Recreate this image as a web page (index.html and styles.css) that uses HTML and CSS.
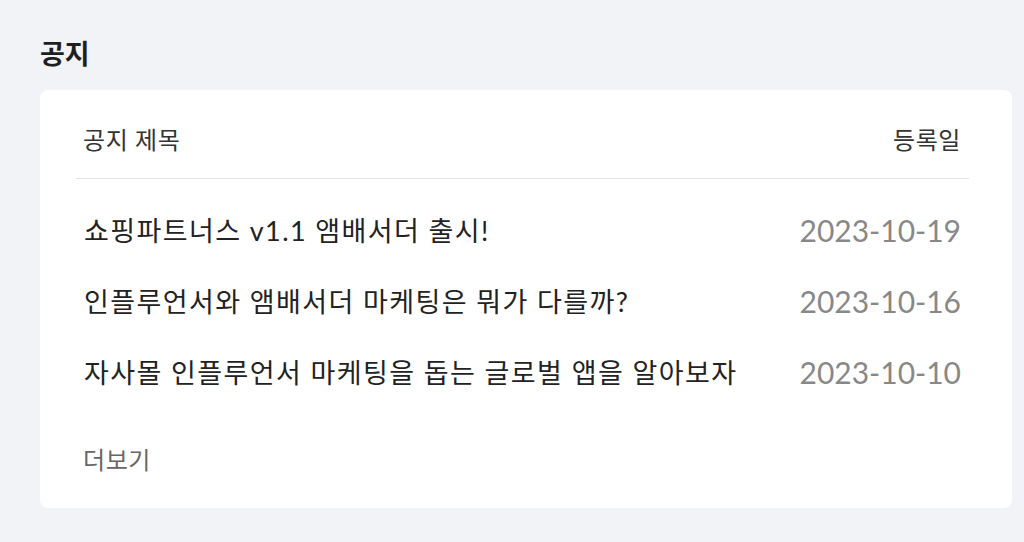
FILE: index.html
```html
<!DOCTYPE html>
<html lang="ko">

<head>
    <meta charset="UTF-8">
    <meta name="viewport" content="width=device-width, initial-scale=1.0">
    <title>공지</title>
    <link rel="stylesheet" href="styles.css">
</head>

<body>
    <div class="notice">
        <h2 class="notice-title">공지</h2>
        <div class="notice-card">
            <div class="notice-head">
                <span>공지 제목</span>
                <span>등록일</span>
            </div>
            <ul class="notice-list">
                <li class="notice-item">
                    <a href="javascript:;" class="notice-name">쇼핑파트너스 v1.1 앰배서더 출시!</a>
                    <span class="notice-date">2023-10-19</span>
                </li>
                <li class="notice-item">
                    <a href="javascript:;" class="notice-name">인플루언서와 앰배서더 마케팅은 뭐가 다를까?</a>
                    <span class="notice-date">2023-10-16</span>
                </li>
                <li class="notice-item">
                    <a href="javascript:;" class="notice-name">자사몰 인플루언서 마케팅을 돕는 글로벌 앱을 알아보자</a>
                    <span class="notice-date">2023-10-10</span>
                </li>
            </ul>
            <a href="javascript:;" class="notice-more">더보기</a>
        </div>
    </div>
</body>

</html>
```

FILE: styles.css
```css
* {
    box-sizing: border-box;
}

body,
html {
    height: 100%;
    margin: 0;
}

body {
    background-color: #f2f3f7;
    font-family: Lato, "Noto Sans CJK KR", sans-serif;
    color: #222;
}

a {
    text-decoration: none;
    color: inherit;
}

.notice {
    padding: 34px 12px 0 40px;
}

.notice-title {
    margin: 0;
    font-size: 27px;
    line-height: 40px;
    font-weight: 700;
    color: #1f1f1f;
}

.notice-card {
    margin-top: 16px;
    height: 418px;
    padding: 0 43px 0 36px;
    background-color: #fff;
    border-radius: 8px;
}

.notice-head {
    display: flex;
    justify-content: space-between;
    padding: 30px 8px 18px 7px;
    line-height: 40px;
    font-size: 24px;
    letter-spacing: 0.6px;
    color: #333;
    border-bottom: 1px solid #e3e3e3;
}

.notice-list {
    list-style: none;
    margin: 0;
    padding: 15px 0 0;
}

.notice-item {
    display: flex;
    justify-content: space-between;
    align-items: center;
    height: 71px;
    padding: 0 8px;
}

.notice-name {
    font-size: 27px;
    letter-spacing: 1.4px;
    color: #222;
}

.notice-date {
    font-size: 30px;
    color: #888;
}

.notice-more {
    display: inline-block;
    margin: 33px 0 0 7px;
    line-height: 40px;
    font-size: 24px;
    letter-spacing: 0.6px;
    color: #666;
}
```
